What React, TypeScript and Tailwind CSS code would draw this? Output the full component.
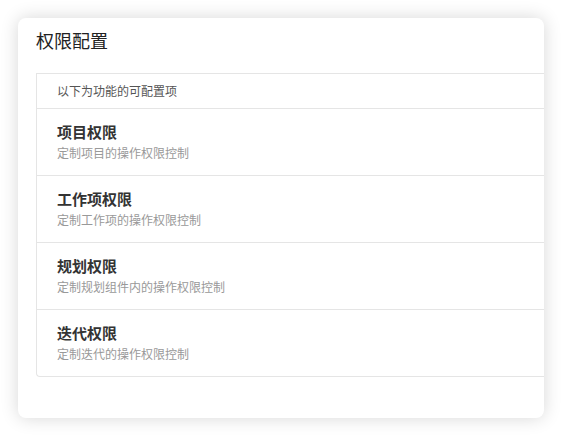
const items = [
  { title: "项目权限", desc: "定制项目的操作权限控制" },
  { title: "工作项权限", desc: "定制工作项的操作权限控制" },
  { title: "规划权限", desc: "定制规划组件内的操作权限控制" },
  { title: "迭代权限", desc: "定制迭代的操作权限控制" },
];

export default function App() {
  return (
    <div
      className="h-[436px] w-[562px] bg-white p-[18px]"
      style={{ fontFamily: '"Noto Sans CJK SC", "Noto Sans", sans-serif' }}
    >
      <div className="h-[400px] w-[526px] overflow-hidden rounded-lg bg-white pl-[18px] pt-[10px] shadow-[0_0_18px_rgba(0,0,0,0.16)]">
        <h1 className="text-[18px] font-normal leading-[24px] text-[#222]">权限配置</h1>
        <div className="mt-[21px] rounded-bl border border-r-0 border-[#e5e5e5]">
          <div className="border-b border-[#e5e5e5] pl-[20px] text-[12px] leading-[34px] text-[#555]">
            以下为功能的可配置项
          </div>
          {items.map((item, i) => (
            <div
              key={item.title}
              className={`pl-[20px] py-[13px] ${i < items.length - 1 ? "border-b border-[#e5e5e5]" : ""}`}
            >
              <div className="text-[15px] font-semibold leading-[20px] text-[#333]">{item.title}</div>
              <div className="mt-[2px] text-[12px] leading-[18px] text-[#999]">{item.desc}</div>
            </div>
          ))}
        </div>
      </div>
    </div>
  );
}
